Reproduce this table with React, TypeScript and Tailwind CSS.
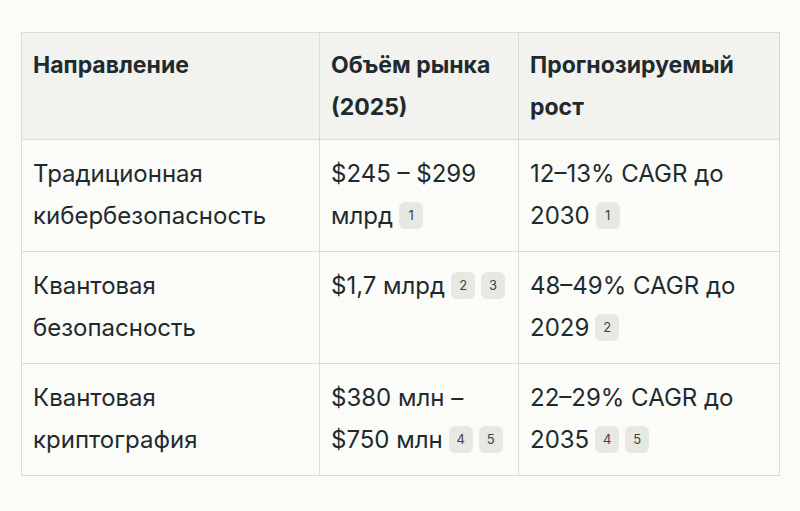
import React from "react";

const Badge = ({ n }: { n: string }) => (
  <span className="inline-flex items-center justify-center align-middle w-[24px] h-[27px] ml-[6px] rounded-[6px] bg-[#e8e8e3] text-[13px] leading-none text-[#3a4444] relative top-[-2px]">
    {n}
  </span>
);

export default function App() {
  const th = "border border-[#dcdcd7] px-[11px] pt-[11px] pb-[11px] text-left align-top font-bold text-[23px] leading-[42px] text-[#1e2b2e]";
  const td = "border border-[#dcdcd7] px-[11px] pt-[13px] pb-[14px] text-left align-top text-[24px] leading-[42px] text-[#1e2b2e]";
  return (
    <div className="w-[800px] h-[511px] bg-[#fbfbf8] pt-[32px] px-[21px]" style={{ fontFamily: "Inter, 'Noto Sans', sans-serif" }}>
      <table className="border-collapse w-[758px] table-fixed">
        <colgroup>
          <col className="w-[298px]" />
          <col className="w-[199px]" />
          <col className="w-[261px]" />
        </colgroup>
        <thead>
          <tr className="bg-[#f2f2ee]">
            <th className={th}>Направление</th>
            <th className={th}>Объём рынка (2025)</th>
            <th className={th}>Прогнозируемый рост</th>
          </tr>
        </thead>
        <tbody>
          <tr>
            <td className={td}>Традиционная кибербезопасность</td>
            <td className={td}>$245 – $299 млрд<Badge n="1" /></td>
            <td className={td}>12–13% CAGR до 2030<Badge n="1" /></td>
          </tr>
          <tr>
            <td className={td}>Квантовая безопасность</td>
            <td className={td}>$1,7 млрд<Badge n="2" /><Badge n="3" /></td>
            <td className={td}>48–49% CAGR до 2029<Badge n="2" /></td>
          </tr>
          <tr>
            <td className={td}>Квантовая криптография</td>
            <td className={td}>$380 млн – $750 млн<Badge n="4" /><Badge n="5" /></td>
            <td className={td}>22–29% CAGR до 2035<Badge n="4" /><Badge n="5" /></td>
          </tr>
        </tbody>
      </table>
    </div>
  );
}
